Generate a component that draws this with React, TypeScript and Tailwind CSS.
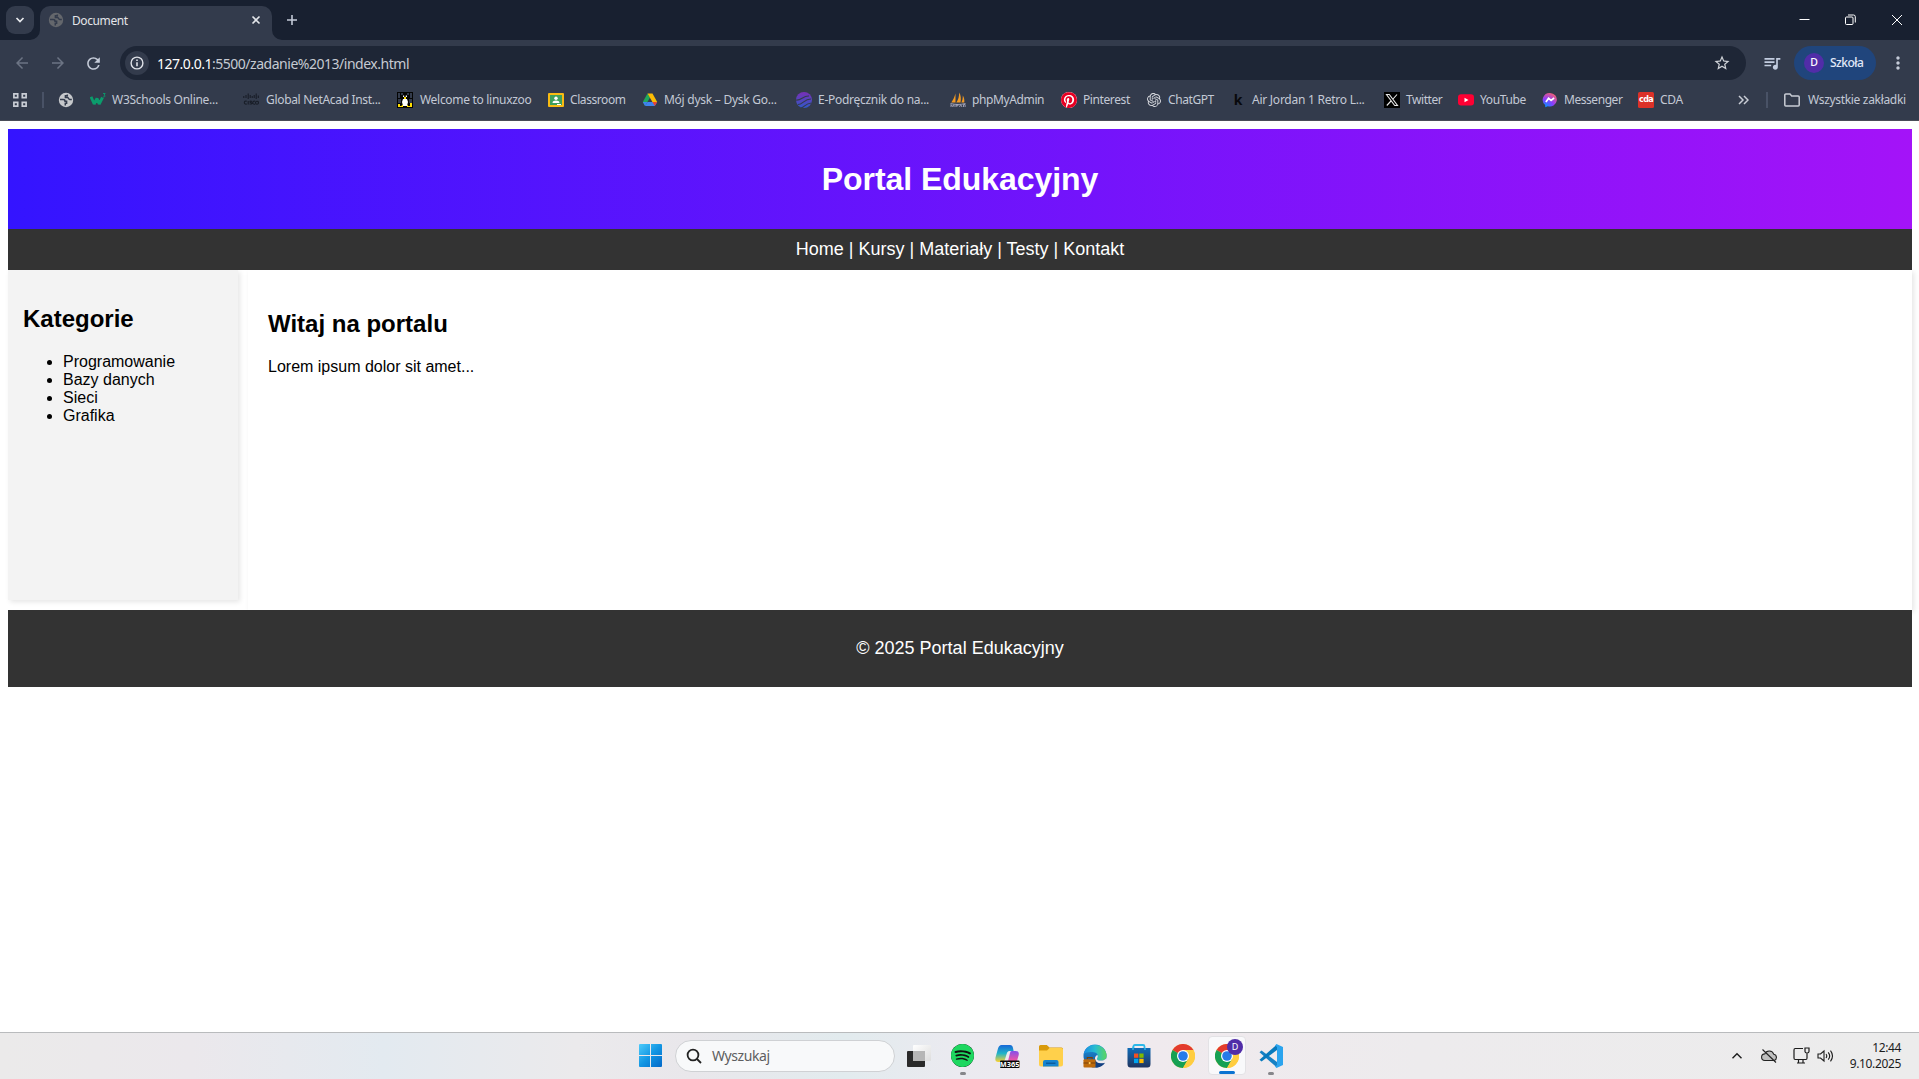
import type { ReactNode } from "react";
import { MdArrowBack, MdArrowForward, MdRefresh, MdStarBorder, MdQueueMusic, MdMoreVert } from "react-icons/md";
import { SiOpenai, SiSpotify, SiPinterest } from "react-icons/si";

const Globe = ({ color, size = 16 }: { color: string; size?: number }) => (
  <svg width={size} height={size} viewBox="0 0 16 16">
    <circle cx="8" cy="8" r="7.2" fill={color} />
    <path d="M2 7.6H5.200C6.600 7.600 7 8.400 7 9.300H8.600V11.200H7.300V13.600" fill="none" stroke="#333b4c" strokeWidth="1.500" />
    <path d="M9.300 2.400V3.800H7.400V5.500H9.600C10.400 5.500 10.600 7.400 11.700 7.400H13.800" fill="none" stroke="#333b4c" strokeWidth="1.500" />
  </svg>
);

const W3 = () => (
  <svg width="16" height="16" viewBox="0 0 16 16">
    <path d="M1 4.800 4.200 12 7 6.500 9.200 12l3.300-6.500" fill="none" stroke="#0b9c6c" strokeWidth="2.900" strokeLinejoin="bevel" />
    <path d="M13 1.500h2.200L14 3.200c1.500 0 1.500 2-.9 1.800" fill="none" stroke="#0b9c6c" strokeWidth=".9" />
  </svg>
);
const Cisco = () => (
  <svg width="16" height="16" viewBox="0 0 16 16" fill="none" stroke="#181d27" strokeWidth="1.100">
    <path d="M.8 4v2M3 3v3M5.200 1.500v5.500M7.200 3v3M9.200 4v2M11.200 3v3M13.200 1.500v5.500M15.300 3.500v2.500" />
    <path d="M3.800 9.300C.5 8 .5 13 3.800 12M5.200 9v3.500M9 9.400c-2.500-.8-2.500.8-1.200 1.100 2 .4 1 2-1.200 1.400M12 9.300c-3-1-3 3.700 0 2.800" />
    <circle cx="14" cy="10.700" r="1.500" />
  </svg>
);
const Linux = () => (
  <svg width="16" height="16" viewBox="0 0 16 16">
    <path fill="#050505" d="M0 0h16v16H0z" />
    <path d="M1 1h2v5H1zM4 1h2v2H4zM10 1h2v2h-2zM13 1h2v5h-2zM1 7h3v4H1zM12 7h3v4h-3z" fill="#333b4c" />
    <path d="M6 7h4l1 3-1 4H6l-1-4z" fill="#fff" />
    <path d="M5.500 3h5v3.500h-5z" fill="#050505" />
    <path d="M6 3.500h1.200V5H6zM8.700 3.500H10V5H8.700z" fill="#fff" />
    <path d="M7 5h2v2H7zM1 12h2v2h2v1H1zM11 14h2v-3h2v4h-4zM5 13h1v2H4zM10 13h1v2h-1z" fill="#fd0" />
  </svg>
);
const Classroom = () => (
  <svg width="16" height="16" viewBox="0 0 16 16">
    <rect y="1" width="16" height="14" rx="1" fill="#f8bb12" />
    <path fill="#3f9f5c" d="M2 3h12v10H2z" />
    <circle cx="8" cy="6.300" r="1.700" fill="#fff" />
    <path d="M4.500 11c0-3.200 7-3.200 7 0zM9 12h4v1H9z" fill="#fff" />
  </svg>
);
const Drive = () => (
  <svg width="16" height="16" viewBox="0 0 16 16">
    <path d="M5.500 1.500 .8 10l2.300 4L8 5.500z" fill="#20a85a" />
    <path d="M5.500 1.500h5L15.200 10h-4.800z" fill="#fbbc04" />
    <path d="m3.100 14 2.400-4h9.700l-2.400 4z" fill="#3f82ee" />
    <path d="M.8 10h4.700l-2.400 4z" fill="#3f82ee" />
    <path d="M10.400 10h4.800l-2.400 4z" fill="#ea4335" />
  </svg>
);
const EBook = () => (
  <svg width="16" height="16" viewBox="0 0 16 16">
    <defs><linearGradient id="ebook" x1="0" y1="0" x2="0" y2="1"><stop stopColor="#792fb5" /><stop offset="1" stopColor="#3159c8" /></linearGradient></defs>
    <circle cx="8" cy="8" r="8" fill="url(#ebook)" />
    <path d="M0 8C5 9 7 3.500 13 4M2 12.500c5 0 6-5.500 13-5.500M5 16c4-1 4-4.500 10.500-5" fill="none" stroke="#333b4c" strokeWidth="1.200" />
  </svg>
);
const PhpMyAdmin = () => (
  <svg width="16" height="16" viewBox="0 0 16 16">
    <path d="M5.500 1.500v9H1.300C3 8 4.500 5 5.500 1.500zM9.200.5c1.800 3 2 6.500 1.300 10H6.300c2-3 2.900-6 2.900-10zM12.800 3.500c1.500 2.500 1.700 4.500 1.500 7h-3c1.200-2 1.500-4 1.500-7z" fill="#f29a22" />
    <path d="M.5 11.500c5 1.300 10 1.300 15 0M1 15v-2.500l1.500 2 1.500-2V15M6 15v-2.500h2v1.300H6M9.500 15l1.200-2.500L12 15M13.500 15v-2.500h1.600V15" fill="none" stroke="#a5a6bb" strokeWidth=".9" />
  </svg>
);
const YouTube = () => (
  <svg width="16" height="16" viewBox="0 0 16 16">
    <rect y="2.300" width="16" height="11.300" rx="3" fill="#ff0033" />
    <path d="M6.500 5.700v4.600L10.500 8z" fill="#fff" />
  </svg>
);
const XLogo = () => (
  <svg width="16" height="16" viewBox="0 0 16 16">
    <path fill="#000" d="M0 0h16v16H0z" />
    <path d="M2.500 2.500h2.800l8.200 11h-2.800zM13 2.500 9 7M7 9l-4.200 4.500" fill="none" stroke="#e8e8e8" strokeWidth="1.100" />
  </svg>
);
const Messenger = () => (
  <svg width="16" height="16" viewBox="0 0 16 16">
    <defs><radialGradient id="msgr" cx=".2" cy="1" r="1.150"><stop stopColor="#0095ff" /><stop offset=".5" stopColor="#8a3cff" /><stop offset="1" stopColor="#ff6464" /></radialGradient></defs>
    <path d="M8 .9a7 6.800 0 1 1-2.200 13.300L3.300 15.200 3.100 13A6.900 6.900 0 0 1 8 .9z" fill="url(#msgr)" />
    <path d="M3.900 10 6.600 6.300l2.500 2L12.100 6" fill="none" stroke="#fff" strokeWidth="1.700" />
  </svg>
);
const Cda = () => (
  <span className="flex h-4 w-4 items-center justify-center rounded-[1.500px] bg-[#dc3128] font-['DejaVu_Sans'] text-[8px] leading-none font-bold tracking-[-0.7px] text-white">cda</span>
);
const Letter = () => <span className="flex h-4 w-4 items-center justify-center font-['Noto_Sans'] text-[14px] leading-none font-bold text-[#08090c]">k</span>;

type Mark = { label: string; icon: ReactNode; box: string; text: string };
const marks: Mark[] = [
  { label: "", icon: <Globe color="#c6c8cb" />, box: "w-[32px]", text: "" },
  { label: "W3Schools Online...", icon: <W3 />, box: "w-[153px]", text: "tracking-[-0.27px]" },
  { label: "Global NetAcad Inst...", icon: <Cisco />, box: "w-[154px]", text: "tracking-[-0.32px] pl-px" },
  { label: "Welcome to linuxzoo", icon: <Linux />, box: "w-[151px]", text: "tracking-[-0.3px] pl-px" },
  { label: "Classroom", icon: <Classroom />, box: "w-[94px]", text: "tracking-[-0.42px]" },
  { label: "Mój dysk – Dysk Go...", icon: <Drive />, box: "w-[154px]", text: "tracking-[-0.26px]" },
  { label: "E-Podręcznik do na...", icon: <EBook />, box: "w-[154px]", text: "tracking-[-0.28px]" },
  { label: "phpMyAdmin", icon: <PhpMyAdmin />, box: "w-[111px]", text: "tracking-[-0.38px]" },
  { label: "Pinterest", icon: <span className="flex h-4 w-4 rounded-full bg-white"><SiPinterest size={16} color="#e60023" /></span>, box: "w-[85px]", text: "tracking-[-0.4px]" },
  { label: "ChatGPT", icon: <SiOpenai size={14} color="#d9dbe0" />, box: "w-[84px]", text: "tracking-[-0.42px]" },
  { label: "Air Jordan 1 Retro L...", icon: <Letter />, box: "w-[154px]", text: "tracking-[-0.25px]" },
  { label: "Twitter", icon: <XLogo />, box: "w-[74px]", text: "tracking-[-0.42px]" },
  { label: "YouTube", icon: <YouTube />, box: "w-[84px]", text: "tracking-[-0.38px]" },
  { label: "Messenger", icon: <Messenger />, box: "w-[96px]", text: "tracking-[-0.45px]" },
  { label: "CDA", icon: <Cda />, box: "w-[100px]", text: "tracking-[-0.32px]" },
];

function TabStrip() {
  return (
    <div className="flex h-10 items-end bg-[#182030]">
      <div className="mb-[6px] ml-[6px] flex h-7 w-7 items-center justify-center rounded-[9px] bg-[#333b4c]">
        <svg width="10" height="10" viewBox="0 0 10 10" fill="none" stroke="#e8eaee" strokeWidth="1.700"><path d="m1.500 3 3.500 3.500L8.500 3" /></svg>
      </div>
      <div className="relative ml-[6px] flex h-[34px] w-[232px] items-center rounded-t-[10px] bg-[#333b4c] pt-0">
        <svg className="absolute bottom-0 -left-[10px]" width="10" height="10"><path d="M10 0v10H0A10 10 0 0 0 10 0" fill="#333b4c" /></svg>
        <svg className="absolute -right-[10px] bottom-0" width="10" height="10"><path d="M0 0v10h10A10 10 0 0 1 0 0" fill="#333b4c" /></svg>
        <div className="mb-[6px] ml-2 flex"><Globe color="#64676c" /></div>
        <span className="mb-[4px] ml-2 text-[12px] tracking-[-0.4px] text-[#e3e5e9]">Document</span>
        <svg className="mr-[11px] mb-[6px] ml-auto" width="10" height="10" viewBox="0 0 10 10" stroke="#e3e5e9" strokeWidth="1.600"><path d="m1.500 1.500 7 7m0-7-7 7" /></svg>
      </div>
      <svg className="mb-[14px] ml-[14px]" width="12" height="12" viewBox="0 0 12 12" stroke="#c3cad8" strokeWidth="1.600"><path d="M6 1v10M1 6h10" /></svg>
      <div className="mr-[16px] mb-[14px] ml-auto flex items-center gap-[35px]">
        <svg width="11" height="12" viewBox="0 0 11 12" stroke="#fff"><path d="M.5 5.500h10" /></svg>
        <svg width="11" height="12" viewBox="0 0 11 12" fill="none" stroke="#fff"><rect x=".5" y="3" width="7.500" height="7.500" rx="1" /><path d="M3 1h5.500a1.800 1.800 0 0 1 1.800 1.800v5.700" /></svg>
        <svg width="12" height="12" viewBox="0 0 12 12" stroke="#fff"><path d="m1 1 10 10m0-10L1 11" /></svg>
      </div>
    </div>
  );
}

function Toolbar() {
  return (
    <div className="flex h-[46px] items-center">
      <MdArrowBack className="ml-[13px]" size={18} color="#6c7484" />
      <MdArrowForward className="ml-[18px]" size={18} color="#6c7484" />
      <MdRefresh className="ml-[17px]" size={19} color="#c5cbd8" />
      <div className="ml-[17px] flex h-[34px] w-[1626px] items-center rounded-full bg-[#1e2636] pl-[5px]">
        <div className="flex h-6 w-6 items-center justify-center rounded-full bg-[#333b4c]">
          <svg width="14" height="14" viewBox="0 0 14 14" fill="none" stroke="#dfe2e8" strokeWidth="1.400"><circle cx="7" cy="7" r="5.900" /><path d="M7 6.300v4M7 3.500v1.500" strokeWidth="1.600" /></svg>
        </div>
        <span className="ml-[8px] text-[14px] tracking-[-0.48px] text-[#c6cad2]"><span className="text-white">127.0.0.1</span>:5500/zadanie%2013/index.html</span>
        <MdStarBorder className="mr-[15px] ml-auto" size={18} color="#d0d3d9" />
      </div>
      <MdQueueMusic className="ml-[16px]" size={20} color="#c3cde0" />
      <div className="ml-[12px] flex h-[34px] w-[82px] items-center rounded-full bg-[#20457c] pl-[10px]">
        <span className="flex h-5 w-5 items-center justify-center rounded-full bg-[#512da8] text-[10.500px] font-medium text-white">D</span>
        <span className="ml-[6px] text-[12px] font-medium tracking-[-0.55px] text-[#e1e9f8]">Szkoła</span>
      </div>
      <MdMoreVert className="ml-[12px]" size={20} color="#c5cbd8" />
    </div>
  );
}

function Bookmarks() {
  return (
    <div className="flex h-[35px] items-center border-b border-[#4a4c58] pb-[7px] text-[12px] whitespace-nowrap text-[#c3c9d5]">
      <div className="flex h-7 w-[58px] items-center pl-[13px]">
        <svg width="14" height="14" viewBox="0 0 14 14" fill="none" stroke="#c9cdd5" strokeWidth="1.700"><path d="M.9.9h3.800v3.800H.9zM9.300.9h3.800v3.800H9.300zM.9 9.300h3.800v3.800H.9zM9.300 9.300h3.800v3.800H9.300z" /></svg>
        <div className="ml-[15px] h-4 w-[2px] bg-[#495266]" />
      </div>
      {marks.map((m) => (
        <div key={m.label} className={`flex items-center ${m.box}`}>
          <span className="flex w-4 shrink-0 justify-center">{m.icon}</span>
          <span className={`ml-[6px] ${m.text}`}>{m.label}</span>
        </div>
      ))}
      <svg width="11" height="10" viewBox="0 0 11 10" fill="none" stroke="#c9cdd5" strokeWidth="1.500"><path d="m1 1 4 4-4 4M6 1l4 4-4 4" /></svg>
      <div className="ml-[17px] h-4 w-[2px] bg-[#495266]" />
      <svg className="ml-[16px]" width="16" height="14" viewBox="0 0 16 14" fill="none" stroke="#c9cdd5" strokeWidth="1.500"><path d="M.8 12V2a1 1 0 0 1 1-1h4.200l1.700 1.900h6.500a1 1 0 0 1 1 1V12a1 1 0 0 1-1 1H1.800a1 1 0 0 1-1-1z" /></svg>
      <span className="ml-[8px] tracking-[-0.32px]">Wszystkie zakładki</span>
    </div>
  );
}

function Page() {
  return (
    <div className="h-[911px] bg-white px-2 pt-2 font-['Liberation_Sans',Arial,sans-serif] text-[16px] leading-[normal] text-black">
      <div className="w-[1904px]">
        <header className="flex h-[100px] items-center justify-center bg-[linear-gradient(90deg,#3414ff,#a413f8)] text-white">
          <h1 className="text-[32px] leading-[normal] font-bold tracking-[-0.05px]">Portal Edukacyjny</h1>
        </header>
        <nav className="relative h-[41px] bg-[#333] pt-[10px] text-center text-[18px] leading-[21px] text-white">Home | Kursy | Materiały | Testy | Kontakt</nav>
        <div className="flex items-start gap-[10px]">
          <aside className="h-[330px] w-[230px] bg-[#f3f3f3] p-[15px] shadow-[2px_2px_5px_rgba(0,0,0,0.1)]">
            <h2 className="mt-[20px] text-[24px] leading-[27px] font-bold">Kategorie</h2>
            <ul className="mt-[21px] list-disc pl-10 leading-[18px]">
              <li>Programowanie</li>
              <li>Bazy danych</li>
              <li>Sieci</li>
              <li>Grafika</li>
            </ul>
          </aside>
          <main className="h-[340px] flex-1 bg-white p-5 shadow-[2px_2px_5px_rgba(0,0,0,0.1)]">
            <h2 className="mt-[20px] text-[24px] leading-[27px] font-bold">Witaj na portalu</h2>
            <p className="mt-[21px] leading-[18px]">Lorem ipsum dolor sit amet...</p>
          </main>
        </div>
        <footer className="relative h-[77px] bg-[#333] pt-[28px] text-center text-[18px] leading-[21px] text-white">© 2025 Portal Edukacyjny</footer>
      </div>
    </div>
  );
}

const Chrome = () => (
  <svg width="24" height="24" viewBox="0 0 24 24">
    <circle cx="12" cy="12" r="12" fill="#ffcd40" />
    <path d="M12 12 1.600 6A12 12 0 0 1 22.400 6z" fill="#e33b2e" />
    <path d="M1.600 6A12 12 0 0 0 12 24l5.200-9-5.200-3z" fill="#16a053" />
    <path d="M12 6h10.400A12 12 0 0 1 12 24l5.200-9z" fill="#ffcd40" />
    <circle cx="12" cy="12" r="6" fill="#fff" />
    <circle cx="12" cy="12" r="4.800" fill="#267be9" />
  </svg>
);
const TaskView = () => (
  <svg width="24" height="24" viewBox="0 0 24 24">
    <defs><linearGradient id="tvw" x1="0" y1="0" x2="1" y2="1"><stop stopColor="#fff" /><stop offset="1" stopColor="#ddd" /></linearGradient></defs>
    <rect y="7" width="18" height="16" rx="1" fill="#2a2a2a" />
    <rect x="6" y="1" width="18" height="16" rx="1" fill="url(#tvw)" />
    <path d="M6 7h12v10H6z" fill="#b6b6b6" />
  </svg>
);
const Copilot = () => (
  <svg width="26" height="26" viewBox="0 0 26 26">
    <defs>
      <linearGradient id="cpa" x1="0" y1="0" x2="0" y2="1"><stop stopColor="#1767d8" /><stop offset=".5" stopColor="#20b4c8" /><stop offset="1" stopColor="#ffd22e" /></linearGradient>
      <linearGradient id="cpb" x1="0" y1="0" x2="0" y2="1"><stop stopColor="#8450eb" /><stop offset=".6" stopColor="#eb55a7" /><stop offset="1" stopColor="#ff875c" /></linearGradient>
    </defs>
    <path d="M7.500 2h8.500q2.500 0 3 3l.6 3h-4c-2 0-2.500 1.500-3 3l-1.500 5q-.8 3-3.500 3H4.500Q.5 19 1.500 14.500l2.500-9Q5 2 7.500 2z" fill="url(#cpa)" />
    <path d="M17.500 8h4q4 0 3.200 4l-2 7q-1 4-4 4H10q3-1 4-5l2-8q.4-2 1.500-2z" fill="url(#cpb)" />
    <rect x="6" y="17.500" width="19.500" height="7.500" rx="1" fill="#080808" />
    <text x="15.700" y="23.900" textAnchor="middle" fill="#fff" fontFamily="Noto Sans" fontWeight="700" fontSize="7.400">M365</text>
  </svg>
);
const Folder = () => (
  <svg width="24" height="24" viewBox="0 0 24 24">
    <path d="M0 2.500Q0 1 1.500 1h6.300l2.700 2.500H22.500Q24 3.500 24 5v8H0z" fill="#d99a0b" />
    <path d="M0 6.500h8l2.500-2.500H22.500Q24 4 24 5.500v15q0 2-2 2H2q-2 0-2-2z" fill="#ffd04b" />
    <path d="M4 22.500V18q0-2 2-2h11.500q2 0 2 2v4.500z" fill="#1684cf" /><path d="M7 18.500h9.500v1.500H7z" fill="#0a5c9e" />
  </svg>
);
const Edge = () => (
  <svg width="24" height="24" viewBox="0 0 25 25">
    <defs>
      <linearGradient id="edg"><stop stopColor="#1b8ae2" /><stop offset=".5" stopColor="#28bdd0" /><stop offset="1" stopColor="#5cd65e" /></linearGradient>
      <linearGradient id="edb" x1="0" y1="0" x2="0" y2="1"><stop stopColor="#1c98de" /><stop offset="1" stopColor="#154a94" /></linearGradient>
    </defs>
    <circle cx="12.500" cy="12.500" r="12" fill="url(#edb)" />
    <path d="M.8 10.500C3-2.500 22.500-2 24.500 11c.5 5-3 6.500-6.500 6.200-3.500-.2-4.500-1.500-3-3.200 1.200-2 0-5-3.500-5.500C7 7.800 2.500 8.500.8 10.500z" fill="url(#edg)" />
    <path d="M15 11.500c.8 1.500.3 2.500-.3 3.300-.7 1.400 1 2.500 3.600 2.500 2.200 0 4.200-.7 5.700-2.300l.8 2-1.800 3c-4.500 1.500-10 0-10.500-4.500-.2-1.800 1-3.500 2.500-4z" fill="#eeeaed" />
    <path d="M12.500 15c.5 4.500 5 6 10.500 4.500-2 3.500-6 5.200-10 5z" fill="#123f80" />
    <path d="M4.500 16v-1.800h5V16" stroke="#77400a" strokeWidth="1.200" fill="none" />
    <rect x=".5" y="16" width="12.500" height="8.500" rx="1" fill="#be6a0b" /><path d="M.5 19.800H13" stroke="#77400a" fill="none" /><path d="M6 18.800h1.800v2.200H6z" fill="#ffcd5a" />
  </svg>
);
const Store = () => (
  <svg width="24" height="24" viewBox="0 0 24 24">
    <defs><linearGradient id="sto" x1="0" y1="0" x2="0" y2="1"><stop stopColor="#0f6cb8" /><stop offset="1" stopColor="#21345f" /></linearGradient></defs>
    <path d="M6.500 6V2.500Q6.500 1 8 1h8q1.500 0 1.500 1.500V6" fill="none" stroke="#2cb8e9" strokeWidth="1.800" />
    <path d="M.5 4h23v16q0 3.500-3 3.500h-17q-3 0-3-3.500z" fill="url(#sto)" />
    <path d="M6 4V2.500M18 4v2M6 3v3" fill="none" stroke="#2cb8e9" strokeWidth="1.400" />
    <path d="M7 9.500h4.300v4.300H7z" fill="#f25022" /><path d="M12.300 9.500h4.300v4.300h-4.300z" fill="#7fba00" /><path d="M7 14.800h4.300v4.300H7z" fill="#00a4ef" /><path d="M12.300 14.800h4.300v4.300h-4.300z" fill="#ffb900" />
  </svg>
);
const VsCode = () => (
  <svg width="24" height="24" viewBox="0 0 24 24">
    <path d="m.5 8.200 2-1.700L18 18v5.500z" fill="#1681c4" /><path d="m.5 15.800 2 1.700L18 6V.5z" fill="#087abd" />
    <path d="M17.500 0 24 3v18l-6.500 3-1.500-1.500L18 21V3l-2-1.500z" fill="#2ba4ee" />
  </svg>
);

function Task({ children, dot = false, active = false }: { children: ReactNode; dot?: boolean; active?: boolean }) {
  return (
    <div className={active ? "relative mx-[3px] flex h-[39px] w-[38px] items-center justify-center rounded-[4px] border border-[#e3e2e5] bg-[#f9f9fb]" : "relative flex h-[39px] w-11 items-center justify-center"}>
      {children}
      {dot && <span className="absolute bottom-0 left-[19px] h-[3px] w-[6px] rounded-full bg-[#86868a]" />}
      {active && <span className="absolute bottom-0 left-[10px] h-[3px] w-4 rounded-full bg-[#0b73d1]" />}
    </div>
  );
}

function Taskbar() {
  return (
    <div className="flex h-[47px] items-center border-t border-[#b9bbbd] bg-[linear-gradient(90deg,#ebeaea_0%,#ebe8ec_10%,#e3eaf0_20%,#ebeaec_30%,#e9e7eb_36%,#e2ebee_44%,#ebeaf0_50%,#f0eaee_60%,#edebed_74%,#ececec_100%)] pb-px font-['Noto_Sans','Open_Sans',sans-serif] text-[#1c1c1c]">
      <svg className="ml-[639px]" width="23" height="23" viewBox="0 0 23 23">
        <defs><linearGradient id="win" x1="0" y1="0" x2="1" y2="1"><stop stopColor="#4dcbfa" /><stop offset=".5" stopColor="#1296e3" /><stop offset="1" stopColor="#0368c8" /></linearGradient></defs>
        <path d="M1 0h10v11H0V1q0-1 1-1zM12 0h10q1 0 1 1v10H12zM0 12h11v11H1q-1 0-1-1zM12 12h11v10q0 1-1 1H12z" fill="url(#win)" />
      </svg>
      <div className="ml-[13px] flex h-[32px] w-[220px] items-center rounded-full border border-[#cfd1d4] bg-[#f8f9fa] pl-[10px]">
        <svg width="16" height="16" viewBox="0 0 16 16" fill="none" stroke="#222" strokeWidth="1.800"><circle cx="7" cy="7" r="5.400" /><path d="m11 11 4 4" /></svg>
        <span className="ml-[10px] text-[14px] tracking-[-0.42px] text-[#5e5e60]">Wyszukaj</span>
      </div>
      <div className="ml-[2px] flex items-center">
        <Task><TaskView /></Task>
        <Task dot><span className="mr-px flex rounded-full bg-[#101010]"><SiSpotify size={23} color="#1ed760" /></span></Task>
        <Task><Copilot /></Task>
        <Task><Folder /></Task>
        <Task><Edge /></Task>
        <Task><Store /></Task>
        <Task><Chrome /></Task>
        <Task active>
          <Chrome />
          <span className="absolute top-[2px] right-[2px] flex h-4 w-4 items-center justify-center rounded-full bg-[#512da8] text-[9px] text-white">D</span>
        </Task>
        <Task dot><VsCode /></Task>
      </div>
      <svg className="ml-[438px]" width="12" height="12" viewBox="0 0 12 12" fill="none" stroke="#1c1c1c" strokeWidth="1.400"><path d="m1.500 8.300 4.500-4.500 4.500 4.500" /></svg>
      <svg className="ml-[18px]" width="17" height="16" viewBox="0 0 17 16" fill="#bfbfbf" stroke="#222" strokeWidth="1.100"><path d="M4 12.500a3.300 3.300 0 0 1-.2-6.600 4.800 4.800 0 0 1 9 .4 3.200 3.200 0 0 1 .4 6.200z" /><path d="m1.500 1.500 13.500 13" /></svg>
      <svg className="ml-[15px]" width="17" height="17" viewBox="0 0 17 17" fill="none" stroke="#1c1c1c" strokeWidth="1.200"><path d="M10 1.500H2.200Q1 1.500 1 3v8q0 1.500 1.200 1.500H13Q14 12.500 14 11V7M5.500 12.500V16M10 12.500V16M4 16h8M12 1h4v3.500q0 1.500-2 1.500t-2-1.500zM14 6v2" /></svg>
      <svg className="ml-[7px]" width="17" height="16" viewBox="0 0 17 16" fill="none" stroke="#1c1c1c" strokeWidth="1.100"><path d="M1 6h2.500L7 3v10l-3.500-3H1zM9 6q1.500 2 0 4M11.200 4.300q3 3.700 0 7.400M13.500 2.700q4 5.300 0 10.600" /></svg>
      <div className="mr-[18px] ml-auto text-right text-[12px] leading-[16px] tracking-[-0.36px]">
        <div>12:44</div>
        <div>9.10.2025</div>
      </div>
    </div>
  );
}

export default function App() {
  return (
    <div className="flex h-[1079px] w-[1919px] flex-col overflow-hidden bg-white font-['Noto_Sans','Open_Sans',sans-serif]">
      <TabStrip />
      <div className="h-[81px] bg-[#333b4c]">
        <Toolbar />
        <Bookmarks />
      </div>
      <Page />
      <Taskbar />
    </div>
  );
}
